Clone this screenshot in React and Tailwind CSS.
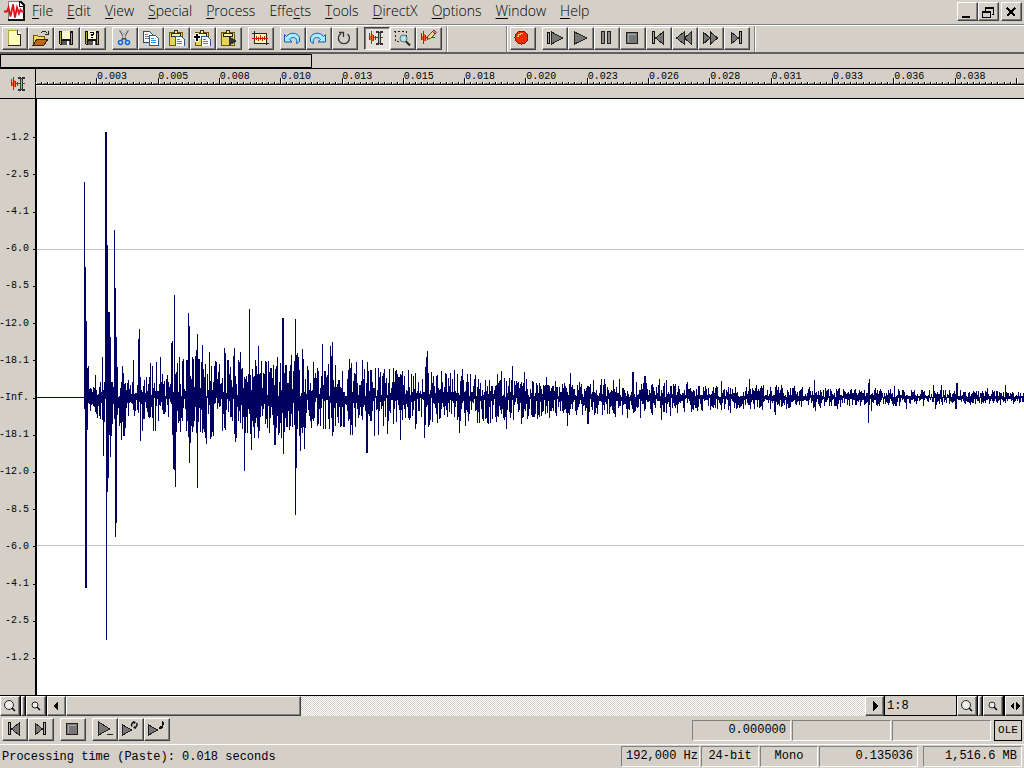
import React from 'react';
import clsx from 'clsx';

const MID = 298;
const WIDTH = 987;

// Loudness of the tail at a few columns: [column, up, down]
const ENVELOPE = [
    [50, 9, 16], [66, 18, 24], [84, 22, 36], [100, 20, 22], [130, 28, 28],
    [160, 40, 42], [200, 40, 44], [260, 40, 40], [300, 32, 32], [350, 32, 32],
    [400, 26, 28], [450, 24, 27], [500, 18, 22], [560, 15, 18], [610, 16, 18],
    [660, 13, 14], [700, 11, 12], [740, 12, 12], [800, 10, 10], [850, 9, 9],
    [900, 8, 8], [950, 7, 7], [987, 6, 6]
];

// Loud samples above and below the centre line: column, height
const UPPER = [
    47, 215, 48, 130, 49, 76, 50, 29, 51, 31, 58, 22, 65, 40, 68, 265, 69, 265, 70, 152, 71, 85, 72, 85, 73, 60,
    77, 167, 78, 109, 79, 60, 80, 30, 85, 31, 86, 24, 96, 37, 101, 58, 102, 68, 113, 34, 115, 31, 119, 35, 123, 40,
    134, 54, 135, 56, 137, 102, 138, 23, 140, 34, 142, 40, 145, 36, 146, 38, 149, 37, 150, 37, 151, 84, 152, 71,
    155, 40, 156, 38, 158, 41, 159, 47, 160, 63, 161, 38, 162, 38, 164, 35, 165, 52, 166, 28, 168, 33, 172, 45,
    177, 31, 187, 49, 188, 44, 191, 37, 196, 41, 197, 49, 201, 37, 203, 45, 204, 28, 211, 23, 212, 88, 219, 31,
    221, 51, 229, 35, 234, 29, 238, 28, 239, 31, 240, 40, 245, 79, 246, 79, 247, 24, 249, 32, 252, 26, 254, 42,
    257, 36, 258, 78, 259, 42, 260, 44, 261, 40, 262, 27, 265, 48, 266, 38, 270, 31, 278, 24, 280, 29, 285, 53,
    287, 26, 291, 33, 293, 51, 294, 41, 295, 55, 298, 32, 305, 26, 312, 38, 314, 34, 319, 35, 325, 37, 330, 35,
    338, 29, 341, 29, 356, 29, 365, 26, 388, 30, 389, 40, 390, 46, 404, 26, 417, 27, 425, 28, 433, 23, 460, 23,
    464, 26, 475, 31, 487, 25, 509, 20, 518, 16, 533, 24, 556, 17, 564, 18, 567, 18, 576, 17, 582, 18, 595, 25,
    596, 25, 607, 21, 608, 21, 622, 18, 629, 17, 650, 15, 684, 16, 712, 18, 719, 12, 726, 12, 739, 12, 744, 12,
    765, 10, 777, 17, 831, 14, 832, 18, 857, 11, 896, 12, 904, 12, 919, 14, 920, 14, 950, 9, 968, 12
];
const LOWER = [
    48, 190, 49, 190, 50, 32, 51, 5, 58, 14, 59, 16, 60, 20, 66, 58, 67, 24, 69, 242, 70, 94, 71, 80, 72, 37, 73, 59,
    74, 38, 75, 26, 78, 139, 79, 125, 80, 17, 82, 28, 84, 42, 86, 38, 87, 38, 103, 43, 105, 33, 116, 33, 118, 33,
    135, 37, 136, 71, 137, 72, 138, 89, 139, 34, 143, 34, 151, 39, 152, 65, 153, 45, 160, 90, 163, 34, 166, 31,
    169, 46, 173, 41, 174, 39, 175, 34, 176, 38, 188, 32, 197, 36, 198, 44, 207, 73, 210, 35, 214, 52, 220, 29,
    222, 33, 228, 26, 237, 47, 238, 47, 242, 35, 244, 40, 246, 56, 247, 34, 250, 29, 253, 28, 255, 29, 258, 117,
    259, 70, 262, 38, 263, 53, 267, 51, 268, 30, 281, 26, 283, 28, 288, 31, 295, 38, 296, 34, 313, 37, 315, 37,
    329, 55, 330, 55, 337, 38, 341, 37, 346, 28, 350, 36, 363, 42, 378, 31, 387, 40, 391, 29, 422, 35, 428, 28,
    453, 25, 469, 31, 476, 22, 484, 26, 485, 20, 501, 17, 530, 28, 550, 26, 551, 26, 578, 19, 590, 20, 603, 20,
    624, 22, 633, 18, 660, 13, 693, 15, 725, 12, 737, 14, 738, 17, 753, 9, 778, 13, 800, 11, 831, 25, 834, 13,
    869, 11, 898, 11, 918, 11, 919, 11, 963, 7
];

const levelAt = x => {
    let i = 1;
    while (ENVELOPE[i][0] < x && i < ENVELOPE.length - 1) i++;
    const [x0, u0, d0] = ENVELOPE[i - 1];
    const [x1, u1, d1] = ENVELOPE[i];
    const t = (x - x0) / (x1 - x0);
    return [u0 + (u1 - u0) * t, d0 + (d1 - d0) * t];
}

const buildWave = () => {
    const up = {};
    const down = {};
    for (let i = 0; i < UPPER.length; i += 2) up[UPPER[i]] = UPPER[i + 1];
    for (let i = 0; i < LOWER.length; i += 2) down[LOWER[i]] = LOWER[i + 1];

    let seed = 4711;
    const random = () => {
        seed = (seed * 16807) % 2147483647;
        return seed / 2147483647;
    }

    let d = '';
    for (let x = 47; x < WIDTH; x++) {
        const [u, l] = levelAt(Math.max(x, 50));
        // most columns lean to one side of the centre line
        const lean = random();
        const a = Math.round(u * (lean < 0.2 ? 0.2 * random() : 0.15 + 0.8 * random()));
        const b = Math.round(l * (lean > 0.8 ? 0.2 * random() : 0.15 + 0.8 * random()));
        const top = MID - (up[x] ?? a);
        const bottom = MID + 1 + (down[x] ?? b);
        d += `M${x} ${top}h1V${bottom}h-1z`;
    }
    return d;
}

const WAVE = buildWave();

const Svg = ({ w = 20, h = 16, children }) => (
    <svg width={w} height={h} viewBox={`0 0 ${w} ${h}`} shapeRendering="crispEdges" className="shrink-0" aria-hidden="true">{children}</svg>
)

const Smooth = ({ children }) => <g shapeRendering="auto">{children}</g>

const Note = ({ x = 8, y = 6 }) => (
    <g>
        <path d={`M${x} ${y}h6l3 3v7h-9z`} fill="#fff" stroke="#1c5f9c" />
        <path d={`M${x + 2} ${y + 3}h3M${x + 2} ${y + 5}h5M${x + 2} ${y + 7}h5`} stroke="#2f8fd8" />
    </g>
)

const Board = () => (
    <g>
        <path d="M3 2h13v13H3z" fill="#e5d455" stroke="#6b5b00" />
        <path d="M5 3h9v3H5z" fill="#f8f4b0" stroke="#222" />
        <path d="M8 0h3v3H8z" fill="#f5ea60" stroke="#333" />
    </g>
)

const Disk = ({ children }) => (
    <g>
        <path d="M3 1h14v14H4l-1-1z" fill="#111" />
        <path d="M4 2h1v12H4zM15 3h1v11h-1z" fill="#b5a642" />
        <path d="M6 1h8v8H6z" fill="#fbf8cf" />
        <path d="M6 11h8v4H6z" fill="#555" />
        <path d="M11 11h2v4h-2z" fill="#fff" />
        {children}
    </g>
)

const Pulse = () => (
    <g>
        <path d="M3 7h14v1H3zM3 3h1v7H3zM5 1h1v13H5zM7 5h1v6H7zM9 6h1v4H9z" fill="#d01000" />
        <path d="M4 6h1v4H4zM6 4h1v7H6z" fill="#ff5a20" />
    </g>
)

const ICONS = {
    new: <><path d="M4 0h9l4 4v11H4z" fill="#fdfbb8" /><path d="M4 0h9v1H5v14H4z" fill="#b7a83a" /><path d="M13 0v4h4" fill="#fff" stroke="#333" /><path d="M16 4h1v12H4v-1h12z" fill="#222" /></>,
    open: <><path d="M3 5h4l1 1h6v3H7l-3 5H3z" fill="#f3df59" stroke="#6b5200" /><path d="M7 9h11l-4 6H3z" fill="#b96a1d" stroke="#3d2200" /><path d="M11 3l2-2h2l2 2M18 1v3h-3" fill="none" stroke="#222" /></>,
    save: <Disk />,
    saveAs: <Disk><path d="M8 2h4v3h-1v1H9V4h2V3H8zM9 7h2v1H9z" /></Disk>,
    cut: <Smooth><path d="M6 0l6 10M14 0L8 10" stroke="#444" strokeWidth="2" /><path d="M6.500 0l4.500 8M13.500 0L9 8" stroke="#e4eaee" /><circle cx="6.500" cy="12.500" r="2" fill="#bfeaff" stroke="#1565c8" strokeWidth="1.500" /><circle cx="13.500" cy="12.500" r="2" fill="#bfeaff" stroke="#1565c8" strokeWidth="1.500" /></Smooth>,
    copy: <><path d="M3 1h6l3 3v8H3z" fill="#fff" stroke="#444" /><path d="M5 4h3M5 6h5M5 8h5" stroke="#777" /><Note x={9} y={5} /></>,
    paste: <><Board /><Note x={9} y={6} /></>,
    pasteMix: <><Board /><Note x={9} y={6} /><path d="M1 7h8M5 3v9" stroke="#fff" strokeWidth="4" /><path d="M2 7h6M5 4v7" stroke="#000" strokeWidth="2" /></>,
    pastePlay: <><Board /><path d="M11 6l8 5-8 5z" fill="#333" /></>,
    trim: <><path d="M5 3h11v10H5z" fill="#fff9a8" /><path d="M2 3h15v12h-1V4H2zM4 1h1v12h14v1H4z" fill="#222" /><path d="M2 8h16v1H2zM6 6h1v4H6zM8 7h1v4H8zM10 5h1v5h-1zM12 7h1v4h-1zM14 6h1v4h-1z" fill="#e01000" /></>,
    undo: <Smooth><path d="M2.500 4.500l2 2c3-4.500 11-4.500 13 1v4l-3 2c1-4-1-6-3-6-2 0-3 1-4 2l2.500 2.500h-7.500z" fill="#a8edff" stroke="#155ab0" /></Smooth>,
    redo: <Smooth><path d="M17.500 4.500l-2 2c-3-4.500-11-4.500-13 1v4l3 2c-1-4 1-6 3-6 2 0 3 1 4 2l-2.500 2.500h7.500z" fill="#a8edff" stroke="#155ab0" /></Smooth>,
    repeat: <Smooth><path d="M7 3.500A5.500 5.500 0 1 0 13.500 4" fill="none" stroke="#333" strokeWidth="1.300" /><path d="M5 2.500h4.500V7" fill="none" stroke="#333" strokeWidth="1.300" /></Smooth>,
    edit: <><Pulse /><path d="M10 1h3v1h1V1h3v2h-2v10h2v2h-3v-1h-1v1h-3v-2h2V3h-2z" fill="#333" /><path d="M13 3h1v10h-1z" fill="#aaa" /></>,
    magnify: <><path d="M2 1h12v8M3 1v10h5" fill="none" stroke="#222" strokeDasharray="2 2" /><Smooth><circle cx="11.500" cy="8.500" r="3.500" fill="#a9e6e8" stroke="#567" /><path d="M14 11.500l4 4" stroke="#222" strokeWidth="2" /></Smooth></>,
    pencil: <><Pulse /><Smooth><path d="M9 9l1-3 5-5 2.500 2.500-5 5z" fill="#f0dc90" stroke="#5a4a20" /><path d="M14.500 1.500l1.500-1.500 2.500 2.500-1.500 1.500z" fill="#d78aa0" stroke="#6a3040" /></Smooth></>,
    record: <><circle cx="9.500" cy="7.500" r="6.500" fill="#f52c00" stroke="#7a1800" /><path d="M5 6h1V4h2V3h3v1H9v1H7v2H5z" fill="#ffc080" /></>,
    playAll: <><path d="M3 2h3v12H3z" fill="#111" /><path d="M4 3h1v10H4z" fill="#aaa" /><path d="M7.500 2v12L19 8z" fill="#777" stroke="#222" /></>,
    play: <path d="M4.500 2v12L17 8z" fill="#777" stroke="#222" />,
    pause: <><path d="M5 1h4v13H5zM11 1h4v13h-4z" fill="#222" /><path d="M6 2h2v11H6zM12 2h2v11h-2z" fill="#888" /></>,
    stop: <><path d="M4 2h12v12H4z" fill="#222" /><path d="M5 3h10v10H5z" fill="#777" /><path d="M6 4h8v1H7v7H6z" fill="#aaa" /></>,
    start: <><path d="M4 1h3v13H4z" fill="#111" /><path d="M5 2h1v11H5z" fill="#aaa" /><path d="M15 2v12L7.500 8z" fill="#777" stroke="#222" /></>,
    rewind: <path d="M10 2v12L2.500 8zM17 2v12L10.500 8z" fill="#777" stroke="#222" />,
    forward: <path d="M3 2v12l7-6zM10.500 2v12l7-6z" fill="#777" stroke="#222" />,
    end: <><path d="M5 2v12l7.500-6z" fill="#777" stroke="#222" /><path d="M13 1h3v13h-3z" fill="#111" /><path d="M14 2h1v11h-1z" fill="#aaa" /></>,
    playLine: <><path d="M4.500 1v13L16 8z" fill="#777" stroke="#222" /><path d="M13 13h6v1h-6z" fill="#222" /></>,
    playLoop: <><path d="M2.500 4v10L12 9z" fill="#777" stroke="#222" /><Smooth><path d="M12 5.500A3 3 0 0 1 14 1M16.500 2A3 3 0 0 1 15 6.500" fill="none" stroke="#111" strokeWidth="1.500" /><path d="M13 0l3 1-2 2.500zM16 8l-3-1 2-2.500z" fill="#111" /></Smooth></>,
    playNote: <><path d="M2.500 4v10L12 9z" fill="#777" stroke="#222" /><path d="M16 0h1v1h1v3h-1V3v4h-1v1h-3V6h1V5h2z" fill="#111" /></>
};

const raised = 'border border-t-white border-l-white border-r-[#404040] border-b-[#404040] shadow-[inset_-1px_-1px_0_#808080]';
const sunken = 'border border-t-[#808080] border-l-[#808080] border-r-white border-b-white';

const ToolButton = ({ icon, label, active }) => (
    <button type="button" aria-label={label} aria-pressed={active}
        className={clsx('flex h-[23px] w-[26px] shrink-0 items-start pt-0.5 pl-px', active ? 'border border-t-[#404040] border-l-[#404040] border-r-white border-b-white bg-[#e6e3de] shadow-[inset_1px_1px_0_#808080]' : raised)}>
        <Svg>{ICONS[icon]}</Svg>
    </button>
)

const ToolGroup = ({ items }) => (
    <div className="flex">
        {items.map(([icon, label, active]) => <ToolButton key={icon} icon={icon} label={label} active={active} />)}
    </div>
)

const FILE_TOOLS = [['new', 'New'], ['open', 'Open'], ['save', 'Save'], ['saveAs', 'Save As']];
const EDIT_TOOLS = [['cut', 'Cut'], ['copy', 'Copy'], ['paste', 'Paste'], ['pasteMix', 'Mix'], ['pastePlay', 'Play Clipboard']];
const UNDO_TOOLS = [['undo', 'Undo'], ['redo', 'Redo'], ['repeat', 'Repeat']];
const MODE_TOOLS = [['edit', 'Edit Tool', true], ['magnify', 'Magnify Tool'], ['pencil', 'Pencil Tool']];
const TRANSPORT = [
    ['playAll', 'Play All'], ['play', 'Play'], ['pause', 'Pause'], ['stop', 'Stop'],
    ['start', 'Go to Start'], ['rewind', 'Rewind'], ['forward', 'Forward'], ['end', 'Go to End']
];

// [text before the access key, access key, text after]
const MENUS = [
    ['', 'F', 'ile'], ['', 'E', 'dit'], ['', 'V', 'iew'], ['', 'S', 'pecial'], ['', 'P', 'rocess'],
    ['Effe', 'c', 'ts'], ['', 'T', 'ools'], ['', 'D', 'irectX'], ['', 'O', 'ptions'], ['', 'W', 'indow'], ['', 'H', 'elp']
];

const MenuBar = () => (
    <header className="flex h-[25px] items-center border-b border-[#808080] pr-0.5 pb-0.5 pl-1">
        <Svg w={22} h={22}>
            <path d="M4 1h12l5 5v15H4z" fill="#fff" />
            <path d="M4 1h12v1H5v18H4z" fill="#808080" />
            <path d="M16 1h1l4 4v16H4v-2h15V7h-4V1z" fill="#111" />
            <path d="M16 3v3h3z" fill="#fff" />
            <Smooth>
                <path d="M0 11.500h3l1.500-4 2 9 2.500-12 2 13 2-10 2 6 1.500-4 1.500 2h2" fill="none" stroke="#e0101c" strokeWidth="1.800" />
            </Smooth>
        </Svg>
        <nav className="ml-1.5 flex flex-1 gap-3.5 font-['Open_Sans',sans-serif] text-sm font-light">
            {MENUS.map(([before, key, after]) => (
                <button key={before + key + after} type="button" className="leading-5 whitespace-nowrap">
                    {before}<span className="underline underline-offset-2">{key}</span>{after}
                </button>
            ))}
        </nav>
        <div className="flex">
            <button type="button" aria-label="Minimize" className={clsx('h-[19px] w-[21px]', raised)}>
                <Svg w={18} h={15}><path d="M4 12h8v2H4z" /></Svg>
            </button>
            <button type="button" aria-label="Restore" className={clsx('h-[19px] w-[21px]', raised)}>
                <Svg w={18} h={15}><path d="M6 3h9v8h-2v-1h1V5H7v2H6zM3 7h9v7H3zM4 9v4h7V9z" fillRule="evenodd" /></Svg>
            </button>
            <button type="button" aria-label="Close" className={clsx('ml-0.5 h-[19px] w-[21px]', raised)}>
                <Svg w={18} h={15}><path d="M5 4l8 8M13 4l-8 8" stroke="#000" strokeWidth="2" /></Svg>
            </button>
        </div>
    </header>
)

const ToolBar = () => (
    <div className="flex h-[29px] border-t border-b-2 border-t-white border-b-[#606060] pl-0.5">
        <div className="flex items-start gap-1.5 border-r border-[#808080] pt-px pr-1">
            <ToolGroup items={FILE_TOOLS} />
            <ToolGroup items={EDIT_TOOLS} />
            <ToolButton icon="trim" label="Trim" />
            <ToolGroup items={UNDO_TOOLS} />
            <ToolGroup items={MODE_TOOLS} />
        </div>
        <div className="w-[60px] border-r border-l border-r-[#808080] border-l-white"></div>
        <div className="flex items-start gap-1.5 border-r border-l border-r-[#808080] border-l-white pt-px pr-1 pl-0.5">
            <ToolButton icon="record" label="Record" />
            <ToolGroup items={TRANSPORT} />
        </div>
        <div className="border-l border-white"></div>
    </div>
)

const TIMES = ['0.003', '0.005', '0.008', '0.010', '0.013', '0.015', '0.018', '0.020', '0.023', '0.026', '0.028', '0.031', '0.033', '0.036', '0.038'];

const Ruler = () => (
    <div className="flex h-[30px] border-b border-black">
        <div className="flex w-9 items-center justify-center border-r border-black">
            <Svg>{ICONS.edit}</Svg>
        </div>
        <div className="min-w-0 flex-1">
            <div className="relative h-4 border-b border-black">
                <svg className="absolute inset-0 h-full w-full" viewBox="0 0 988 15" preserveAspectRatio="none" shapeRendering="crispEdges" aria-hidden="true">
                    <path d="M0 14h988v1H0z" fill="#808080" />
                    {Array.from({ length: 161 }, (_, i) => {
                        const x = Math.round(i * 6.13) - 1;
                        const h = i % 10 === 0 && i > 0 ? 6 : 2;
                        return (
                            <g key={i}>
                                <path d={`M${x} ${15 - h}h1v${h}h-1z`} />
                                <path d={`M${x + 1} ${15 - h}h1v${h}h-1z`} fill="#fff" />
                            </g>
                        );
                    })}
                </svg>
                <div className="relative flex pr-2 pl-[60px] font-['Liberation_Mono',monospace] text-[10px] leading-4">
                    {TIMES.map(time => <span key={time} className="flex-1 pl-px">{time}</span>)}
                </div>
            </div>
            <div className="h-px bg-white"></div>
        </div>
    </div>
)

const LEVELS = ['-1.2', '-2.5', '-4.1', '-6.0', '-8.5', '-12.0', '-18.1', '-Inf.', '-18.1', '-12.0', '-8.5', '-6.0', '-4.1', '-2.5', '-1.2'];

const WaveView = () => (
    <main className="flex min-h-0 flex-1 border-b border-black">
        <div className="flex w-[37px] flex-col border-r-2 border-black pt-5 pb-[18px] font-['Liberation_Mono',monospace] text-[10px] leading-3">
            {LEVELS.map((level, i) => (
                <div key={i} className="flex flex-1 items-center justify-end gap-1 whitespace-nowrap">
                    {level}
                    <span className="h-px w-0.5 shrink-0 bg-black"></span>
                </div>
            ))}
        </div>
        <div className="min-w-0 flex-1 bg-white">
            <svg className="block h-full w-full" viewBox="0 0 987 596" preserveAspectRatio="none" shapeRendering="crispEdges" role="img" aria-label="Waveform">
                <path d="M0 150h987v1H0zM0 446h987v1H0z" fill="#c0c0c0" />
                <path d="M0 298h987v1H0z" fill="#000060" />
                <path d={WAVE} fill="#000060" />
            </svg>
        </div>
    </main>
)

const ZoomButton = ({ label, small }) => (
    <button type="button" aria-label={label} className={clsx('flex h-5 w-5 shrink-0 items-center justify-center', raised)}>
        <Svg w={14} h={14}>
            <Smooth>
                {small
                    ? <><circle cx="6" cy="6" r="3" fill="#eee" stroke="#222" /><path d="M8 8l3 3" stroke="#000" strokeWidth="1.500" /></>
                    : <><circle cx="6" cy="6" r="4.500" fill="#eee" stroke="#222" /><path d="M9 9l3 3" stroke="#000" strokeWidth="1.500" /></>}
            </Smooth>
        </Svg>
    </button>
)

const ArrowButton = ({ label, d }) => (
    <button type="button" aria-label={label} className={clsx('flex h-5 w-[19px] shrink-0 items-center justify-center', raised)}>
        <Svg w={12} h={10}><path d={d} /></Svg>
    </button>
)

const Splitter = () => (
    <div className="w-1.5 shrink-0 border-x border-black">
        <div className={clsx('h-full', raised)}></div>
    </div>
)

const ScrollRow = () => (
    <div className="flex h-5 shrink-0 font-['Liberation_Mono',monospace] text-xs">
        <ZoomButton label="Zoom in vertically" />
        <Splitter />
        <ZoomButton label="Zoom out vertically" small />
        <div className="w-px bg-black"></div>
        <ArrowButton label="Scroll left" d="M7 0v10L2 5z" />
        <div className="flex flex-1 bg-[repeating-conic-gradient(#ffffff_0_25%,#d4d0c8_0_50%)] bg-[length:2px_2px]">
            <div className={clsx('w-[29.4%] bg-[#d4d0c8]', raised)}></div>
        </div>
        <ArrowButton label="Scroll right" d="M4 0v10l5-5z" />
        <div className="w-[73px] border-r border-b border-l border-black pl-0.5 leading-5">1:8</div>
        <ZoomButton label="Zoom in" />
        <Splitter />
        <ZoomButton label="Zoom out" small />
        <div className="w-0.5 bg-black"></div>
        <ArrowButton label="Zoom to selection" d="M5 1v8L1 5zM7 1v8l4-4z" />
    </div>
)

const Cell = ({ className, children }) => (
    <div className={clsx('h-[21px] shrink-0 px-1 leading-[19px] whitespace-nowrap', sunken, className)}>{children}</div>
)

const PlayBar = () => (
    <div className="flex h-[29px] shrink-0 items-start border-b border-white pt-0.5 pl-0.5 font-['Liberation_Mono',monospace] text-xs">
        <div className="flex flex-1 gap-1.5">
            <ToolGroup items={[['start', 'Go to Start'], ['end', 'Go to End']]} />
            <ToolButton icon="stop" label="Stop" />
            <ToolGroup items={[['playLine', 'Play Normal'], ['playLoop', 'Play Looped'], ['playNote', 'Play as Sample']]} />
        </div>
        <div className="flex gap-px pt-0.5 pr-0.5">
            <Cell className="w-[99px] text-right">0.000000</Cell>
            <Cell className="w-[99px]"></Cell>
            <Cell className="w-[99px]"></Cell>
            <div className="ml-0.5 h-[21px] w-7 border border-black text-center text-[11px] leading-[18px]">OLE</div>
        </div>
    </div>
)

const StatusBar = () => (
    <footer className="flex h-[23px] shrink-0 items-center pr-0.5 pl-0.5 font-['Liberation_Mono',monospace] text-xs">
        <div className="flex-1 truncate">Processing time (Paste): 0.018 seconds</div>
        <div className="flex gap-px">
            <Cell className="w-[79px] px-0 text-center">192,000 Hz</Cell>
            <Cell className="w-[58px] text-center">24-bit</Cell>
            <Cell className="w-[58px] text-center">Mono</Cell>
            <Cell className="w-[99px] text-right">0.135036</Cell>
            <Cell className="ml-1 w-[99px] text-right">1,516.6 MB</Cell>
        </div>
    </footer>
)

const App = () => {
    return (
        <div className="flex h-screen flex-col overflow-hidden bg-[#d4d0c8] text-black">
            <MenuBar />
            <ToolBar />
            <div className="h-[15px] border-b border-black">
                <div className="h-3.5 w-[30.5%] border border-black"></div>
            </div>
            <Ruler />
            <WaveView />
            <ScrollRow />
            <PlayBar />
            <StatusBar />
        </div>
    )
}

export default App;
